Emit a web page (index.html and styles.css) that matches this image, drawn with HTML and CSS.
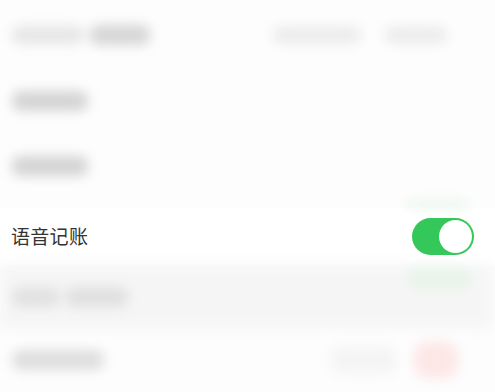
FILE: index.html
```html
<!DOCTYPE html>
<html lang="zh">
<head>
<meta charset="utf-8">
<link rel="stylesheet" href="styles.css">
</head>
<body>
<div class="page">
  <div class="blurred top">
    <div class="row r1">
      <div class="group">
        <span class="blob b-l1"></span>
        <span class="blob b-l2"></span>
      </div>
      <div class="group">
        <span class="blob b-r1"></span>
        <span class="blob b-r2"></span>
      </div>
    </div>
    <div class="row r2">
      <span class="blob b-t"></span>
    </div>
    <div class="row r3">
      <span class="blob b-t"></span>
    </div>
    <div class="greenbar"></div>
  </div>

  <div class="focus-row">
    <span class="label">语音记账</span>
    <div class="toggle on"><span class="knob"></span></div>
  </div>

  <div class="blurred bottom">
    <div class="row r4">
      <div class="group">
        <span class="blob b-g1"></span>
        <span class="blob b-g2"></span>
      </div>
      <span class="blob b-green"></span>
    </div>
    <div class="row r5">
      <span class="blob b-t5"></span>
      <div class="group">
        <span class="blob b-faint"></span>
        <span class="blob b-red"></span>
      </div>
    </div>
  </div>
</div>
</body>
</html>
```

FILE: styles.css
```css
html, body {
  margin: 0;
  padding: 0;
  background: #fdfdfd;
  font-family: "Noto Sans CJK SC", "Noto Sans", sans-serif;
}

.page {
  width: 495px;
  height: 392px;
  overflow: hidden;
  display: flex;
  flex-direction: column;
}

.blurred {
  filter: blur(6px);
  display: flex;
  flex-direction: column;
}

.top {
  height: 208px;
}

.row {
  display: flex;
  align-items: center;
  justify-content: space-between;
  padding: 0 48px 0 12px;
}

.group {
  display: flex;
  align-items: center;
  gap: 6px;
}

.blob {
  display: inline-block;
  border-radius: 8px;
}

.r1 { height: 72px; padding-right: 48px; }
.b-l1 { width: 72px; height: 18px; background: #e6e6e6; }
.b-l2 { width: 60px; height: 20px; background: #d6d6d6; }
.b-r1 { width: 88px; height: 18px; background: #ececec; }
.b-r2 { width: 62px; height: 18px; background: #ececec; margin-left: 18px; }

.r2 { height: 60px; }
.r3 { height: 72px; }
.b-t { width: 76px; height: 20px; background: #d4d4d4; }

.greenbar {
  align-self: flex-end;
  width: 62px;
  height: 7px;
  margin-right: 26px;
  background: #e6f5e9;
  border-radius: 3px;
}

.focus-row {
  height: 57px;
  flex: none;
  display: flex;
  align-items: center;
  justify-content: space-between;
  padding: 0 21px 0 11px;
  background: #ffffff;
}

.label {
  font-size: 19px;
  color: #333333;
  letter-spacing: 0.3px;
  margin-top: -2px;
}

.toggle {
  width: 62px;
  height: 37px;
  box-sizing: border-box;
  border-radius: 19px;
  padding: 2px;
  display: flex;
  justify-content: flex-end;
  align-items: center;
}

.toggle.on {
  background: #34c759;
}

.knob {
  width: 33px;
  height: 33px;
  border-radius: 50%;
  background: #ffffff;
}

.bottom {
  flex: 1;
}

.r4 {
  height: 63px;
  background: #f5f5f5;
  margin-right: 3px;
  padding-right: 22px;
}
.b-g1 { width: 48px; height: 20px; background: #e2e2e2; }
.b-g2 { width: 62px; height: 20px; background: #e0e0e0; }
.b-green { width: 62px; height: 22px; background: #e8f4ea; align-self: flex-start; margin-top: 2px; }

.r5 {
  height: 64px;
  padding-right: 37px;
}
.b-t5 { width: 92px; height: 20px; background: #dedede; }
.b-faint { width: 64px; height: 26px; background: #f4f4f4; margin-right: 12px; }
.b-red { width: 44px; height: 36px; background: #fde6e6; border-radius: 14px; }
```
